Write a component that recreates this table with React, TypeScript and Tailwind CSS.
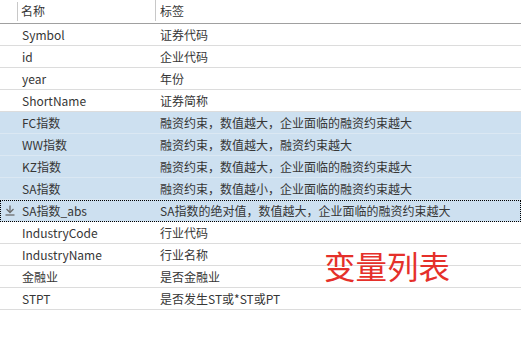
import { ReactNode } from "react";

type Row = { name: string; label: string; selected?: boolean; focused?: boolean };

const rows: Row[] = [
  { name: "Symbol", label: "证券代码" },
  { name: "id", label: "企业代码" },
  { name: "year", label: "年份" },
  { name: "ShortName", label: "证券简称" },
  { name: "FC指数", label: "融资约束，数值越大，企业面临的融资约束越大", selected: true },
  { name: "WW指数", label: "融资约束，数值越大，融资约束越大", selected: true },
  { name: "KZ指数", label: "融资约束，数值越大，企业面临的融资约束越大", selected: true },
  { name: "SA指数", label: "融资约束，数值越小，企业面临的融资约束越大", selected: true },
  { name: "SA指数_abs", label: "SA指数的绝对值，数值越大，企业面临的融资约束越大", selected: true, focused: true },
  { name: "IndustryCode", label: "行业代码" },
  { name: "IndustryName", label: "行业名称" },
  { name: "金融业", label: "是否金融业" },
  { name: "STPT", label: "是否发生ST或*ST或PT" },
];

const SortIcon = () => (
  <svg width="10" height="11" viewBox="0 0 10 11" className="text-[#6b6b6b]">
    <path d="M5 0.5V7" stroke="currentColor" strokeWidth="1.3" fill="none" />
    <path d="M1.5 4L5 7.5L8.5 4" stroke="currentColor" strokeWidth="1.3" fill="none" />
    <path d="M0.5 10H9.5" stroke="currentColor" strokeWidth="1.3" />
  </svg>
);

const Cell = ({ children, className }: { children: ReactNode; className?: string }) => (
  <div className={`flex items-center truncate ${className ?? ""}`}>{children}</div>
);

export default function App() {
  return (
    <div
      className="relative w-[521px] h-[344px] bg-white text-[#363636] text-[12px] overflow-hidden"
      style={{ fontFamily: '"Noto Sans CJK SC", sans-serif' }}
    >
      {/* header */}
      <div className="flex h-[24px] border-b border-[#a0a0a0]">
        <div className="w-[18px] h-[19px] mt-[2px] border-r border-[#c8c8c8]" />
        <Cell className="w-[138px] pl-[3px] h-[21px] border-r border-[#c8c8c8]">名称</Cell>
        <Cell className="pl-[4px] h-[21px]">标签</Cell>
      </div>

      {rows.map((r) => (
        <div
          key={r.name}
          className={`relative flex h-[22px] border-b ${
            r.selected ? "bg-[#cde0f0] border-[#dbe8f3]" : "border-[#dcdcdc]"
          }`}
        >
          <div className="w-[18px] flex items-center justify-center pl-[1px]">
            {r.focused && <SortIcon />}
          </div>
          <Cell className="w-[138px] pl-[4px]">{r.name}</Cell>
          <Cell className="pl-[4px] flex-1">{r.label}</Cell>
          {r.focused && (
            <div className="absolute inset-0 -bottom-px border border-dotted border-black pointer-events-none" />
          )}
        </div>
      ))}

      {/* annotation */}
      <div className="absolute left-[324px] top-[250px] text-[31.5px] leading-none text-[#e5302a]">
        变量列表
      </div>
    </div>
  );
}
